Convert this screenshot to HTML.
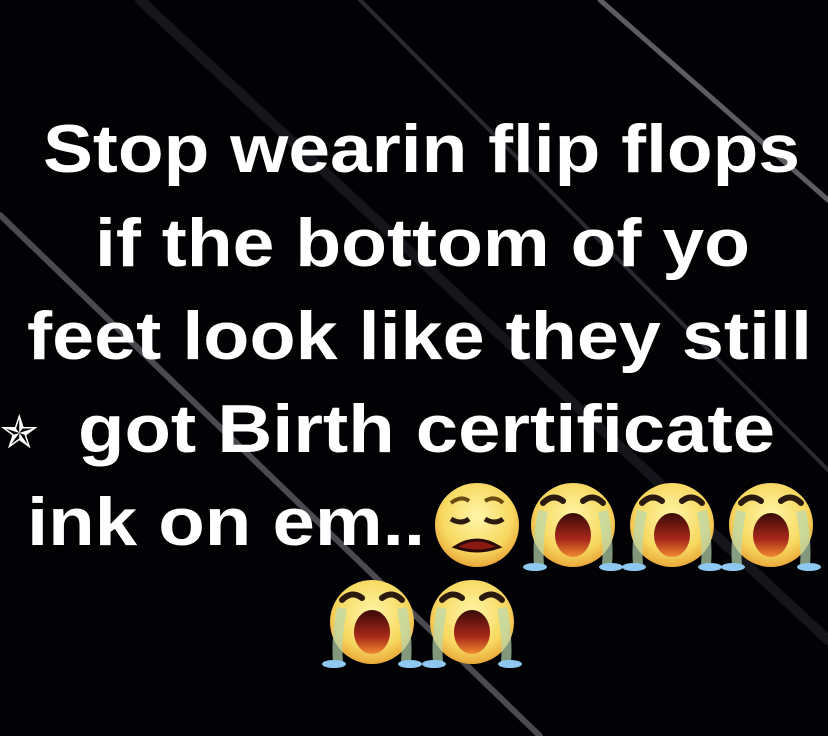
<!DOCTYPE html>
<html><head><style>
html,body{margin:0;padding:0;background:#020205;width:828px;height:736px;overflow:hidden}
svg{display:block}
</style></head><body>
<svg width="828" height="736" viewBox="0 0 828 736" xmlns="http://www.w3.org/2000/svg">
<defs>
<radialGradient id="f" cx="50%" cy="40%" r="60%"><stop offset="0" stop-color="#fff6a8"/><stop offset="0.7" stop-color="#f7d860"/><stop offset="1" stop-color="#e9a83a"/></radialGradient>
<linearGradient id="m" x1="0" y1="0" x2="0" y2="1"><stop offset="0" stop-color="#3a0a08"/><stop offset="0.6" stop-color="#a8281a"/><stop offset="1" stop-color="#f08a30"/></linearGradient>
<g id="cry">
<circle r="42" fill="url(#f)"/>
<path d="M-30 -22 q10 -10 20 -2 M10 -24 q10 -8 20 2" stroke="#2a1a10" stroke-width="6" fill="none" stroke-linecap="round"/>
<path d="M-30 -14 q-6 30 -4 54 M30 -14 q6 30 4 54" stroke="#b8d8b0" stroke-width="10" fill="none" opacity="0.7"/>
<ellipse cx="0" cy="10" rx="18" ry="22" fill="url(#m)"/>
<ellipse cx="-38" cy="42" rx="12" ry="4" fill="#8ec8f0"/>
<ellipse cx="38" cy="42" rx="12" ry="4" fill="#8ec8f0"/>
</g>
</defs>
<rect width="828" height="736" fill="#020205"/>
<g stroke-linecap="round" fill="none">
<line x1="0" y1="215" x2="540" y2="736" stroke="#6a6a70" stroke-width="6" opacity="0.7"/>
<line x1="360" y1="0" x2="828" y2="470" stroke="#3a3a44" stroke-width="4" opacity="0.7"/>
<line x1="600" y1="0" x2="828" y2="200" stroke="#9a9aa0" stroke-width="5" opacity="0.6"/>
<line x1="140" y1="0" x2="828" y2="640" stroke="#15151c" stroke-width="10"/>
</g>
<g font-family="Liberation Sans, Arial, sans-serif" font-weight="bold" font-size="68" fill="#fff">
<text x="43" y="172" textLength="757" lengthAdjust="spacingAndGlyphs">Stop wearin flip flops</text>
<text x="95" y="266" textLength="655" lengthAdjust="spacingAndGlyphs">if the bottom of yo</text>
<text x="27" y="359" textLength="785" lengthAdjust="spacingAndGlyphs">feet look like they still</text>
<text x="78" y="452" textLength="697" lengthAdjust="spacingAndGlyphs">got Birth certificate</text>
<text x="27" y="545" textLength="398" lengthAdjust="spacingAndGlyphs">ink on em..</text>
<text x="0" y="448" font-size="46" font-weight="normal">✯</text>
</g>
<g transform="translate(477,525)">
<circle r="42" fill="url(#f)"/>
<path d="M-26 -22 q10 -8 18 -2 M8 -24 q10 -6 18 2" stroke="#6a4a10" stroke-width="4" fill="none"/>
<path d="M-26 -6 q10 6 18 0 M8 -6 q10 6 18 0" stroke="#2a1a10" stroke-width="5" fill="none"/>
<path d="M-22 22 q22 -14 44 0 q-22 8 -44 0z" fill="#8a1a10" stroke="#2a0a08" stroke-width="3"/>
</g>
<use href="#cry" transform="translate(573,525)"/>
<use href="#cry" transform="translate(672,525)"/>
<use href="#cry" transform="translate(771,525)"/>
<use href="#cry" transform="translate(372,622)"/>
<use href="#cry" transform="translate(472,622)"/>
</svg>
</body></html>
